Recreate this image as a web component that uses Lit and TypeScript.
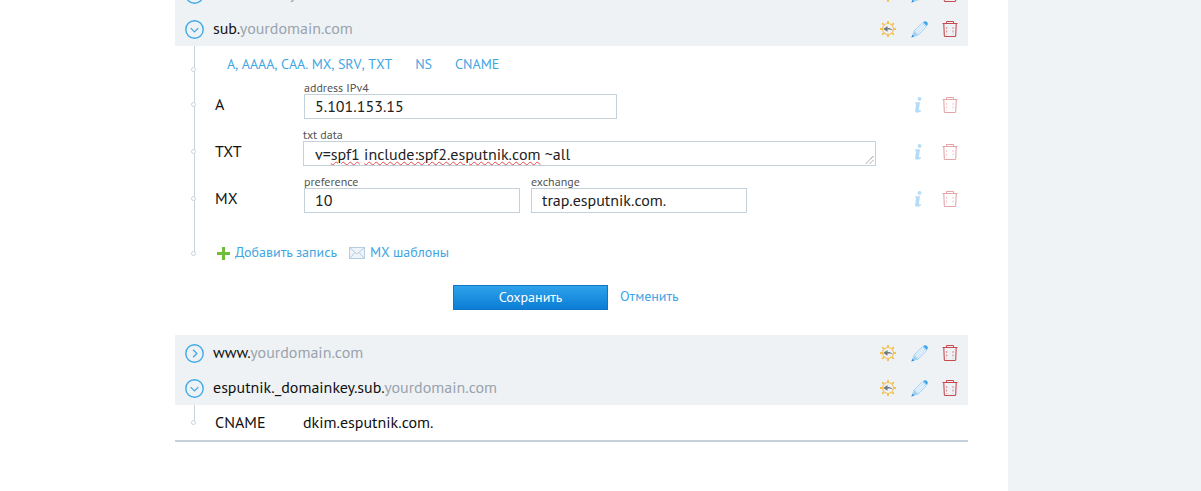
import { LitElement, html, css, svg } from "lit";
import { customElement } from "lit/decorators.js";

const chevron = (open: boolean) => html`<svg class="chev" width="20" height="20" viewBox="0 0 20 20" fill="none" stroke="#3fa9e8">
  <circle cx="9.500" cy="10.500" r="8.700" stroke-width="1.400"/>
  ${open ? svg`<path d="M5.700 9.100 9.500 12.900l3.800-3.800" stroke-width="1.300"/>` : svg`<path d="M8.100 6.700l3.800 3.800-3.800 3.800" stroke-width="1.300"/>`}
</svg>`;

const gear = html`<svg width="16" height="16" viewBox="0 0 16 16" fill="none">
  <circle cx="8" cy="8" r="5.500" stroke="#f3c04e" stroke-width="1.100"/>
  <path d="M8 0v2.500M8 13.500V16M0 8h2.500M13.500 8H16M2.200 2.200l1.600 1.600M12.200 12.200l1.600 1.600M2.200 13.800l1.600-1.600M12.200 3.800l1.600-1.600" stroke="#f3c04e" stroke-width="1.900"/>
  <path d="M3.300 8 7.500 4.900v2.100c2.200 0 4.100.5 5.300 2.500-1.500-.9-3.200-.9-5.300-.9v2.200z" fill="#6f7782"/>
</svg>`;

const pencil = html`<svg width="18" height="17" viewBox="0 0 18 17" fill="none">
  <path d="M2.800 10.200 11.300 1.900l4 4-8.500 8.500z" fill="#cfe6f8" stroke="#8cc6ef" stroke-width=".7"/>
  <path d="M4.400 9.800 12 2.500M5.800 11.200 13.400 3.900M7.200 12.600 14.800 5.300" stroke="#fff" stroke-width=".7"/>
  <path d="M12 1.300C13.100 0 14.800-.2 16 1c1.200 1.200 1.100 2.800-.2 4z" fill="#3fa6ea"/>
  <path d="M2.800 10.200 .4 16.600l6.400-2.200z" fill="#9fd0f2"/>
  <path d="M1.400 13.800.4 16.600l2.900-1z" fill="#2f8fdc"/>
</svg>`;

const trash = (cls: string) => html`<svg class=${cls} width="16" height="16" viewBox="0 0 16 16" fill="none" stroke="currentColor">
  <path d="M.5 2.500h15M4.500 2V.5h7V2" stroke-width="1"/>
  <path d="M1.800 3 2.300 14.400c0 .6.500 1.100 1.100 1.100h9.200c.6 0 1.100-.5 1.100-1.100L14.200 3" stroke-width="1.100"/>
  <path d="M4.700 6v7.500M11 6v7.500" stroke-width=".8" stroke-dasharray="2 1.500" opacity=".8"/>
</svg>`;

const info = html`<svg class="inf" width="8" height="16" viewBox="0 0 8 16" fill="#b5dcf6">
  <circle cx="5.500" cy="1.900" r="1.900"/>
  <path d="M1.200 5.200h4.800L4.900 12.600c-.1.700.4.900 2 .5v1.500c-1.700.8-2.900 1.200-4.100 1.200-1.300 0-1.800-.8-1.600-2.200l.8-6.200c0-.5-.2-.8-.8-.8z"/>
</svg>`;

const mail = html`<svg width="16" height="12" viewBox="0 0 16 12" fill="#eef4f9" stroke="#b5cddf">
  <rect x=".5" y=".5" width="15" height="11"/><path d="M.5 .5 8 7l7.500-6.500M.5 11.500 6 5.500M15.500 11.500 10 5.500" fill="none"/>
</svg>`;

const plus = html`<svg width="13" height="13" viewBox="0 0 13 13" fill="#6fbd3b"><path d="M5 0h3v5h5v3H8v5H5V8H0V5h5z"/></svg>`;

@customElement("app-root")
export class AppRoot extends LitElement {
  static styles = css`
    :host { display: block; height: 491px; overflow: hidden; background: #fff;
      font-family: "PT Sans", "Open Sans", "Noto Sans", sans-serif; font-size: 14px; color: #222; }
    .page { display: grid; grid-template-columns: 1008px 1fr; height: 491px; }
    .side { background: #f0f3f6; }
    .main { padding-left: 175px; padding-right: 40px; overflow: hidden; }
    .list { margin-top: -24px; }
    .head { height: 35px; background: #eef2f5; display: flex; align-items: center; padding: 0 10px; font-size: 16px; }
    .chev { display: block; margin-right: 8px; flex: none; margin-top: 1px; }
    .name { flex: 1; color: #111; padding-bottom: 2px; }
    .name span { color: #9aa3ad; }
    .acts { display: flex; align-items: center; gap: 15px; color: #c8494f; padding-top: 1px; }
    .acts svg { display: block; flex: none; }
    .acts svg:nth-child(2) { margin-right: -2px; }
    .body { position: relative; padding-left: 40px; }
    .rail { position: absolute; left: 19px; top: 0; width: 1px; background: #c8d2da; }
    .dot { position: absolute; left: -24px; width: 5px; height: 5px; box-sizing: border-box; border: 1px solid #c8d2da; border-radius: 50%; background: #fff; }
    .tabs { position: relative; display: flex; gap: 23px; height: 35px; align-items: center; padding-left: 12px; color: #3fa6e3; font-size: 14px; font-kerning: none; }
    .tabs .wide { letter-spacing: -.08px; }
    .tabs .dot { left: -24px; top: 21px; }
    .row { position: relative; height: 47px; display: grid; grid-template-columns: 89px 1fr auto; align-items: center; padding-right: 10px; }
    .row .dot { top: 21px; }
    .type { font-size: 16px; color: #111; padding-bottom: 2px; }
    .fields { display: flex; gap: 11px; align-self: start; }
    .field { display: flex; flex-direction: column; }
    .field label { font-size: 12px; line-height: 13px; color: #555; }
    input, .area { box-sizing: border-box; height: 25px; border: 1px solid #c5d1da; padding: 0 10px 2px; font: inherit; font-size: 16px; color: #222; outline: none; background: #fff; }
    .area { position: relative; display: flex; align-items: center; width: 573px; margin-left: -1px; white-space: pre; padding-left: 11px; padding-bottom: 0; }
    .area svg { position: absolute; right: 1px; bottom: 1px; }
    .sp { text-decoration: underline wavy #e8484c; text-decoration-thickness: 1px; }
    .pale { color: #e5a5a8; }
    .rowacts { display: flex; gap: 20px; align-items: center; justify-content: flex-end; padding-top: 1px; }
    .rowacts svg { display: block; flex: none; }
    .add { position: relative; height: 30px; display: flex; align-items: center; font-size: 14px; color: #3fa6e3; margin-top: 16px; }
    .add .dot { top: 13px; }
    .add a { display: flex; align-items: center; gap: 5px; }
    .add a span { padding-bottom: 2px; }
    .add a + a { margin-left: 12px; }
    .add .p { margin-left: 2px; }
    .foot { display: flex; justify-content: center; align-items: center; gap: 12px; padding: 17px 0 25px; margin-left: -40px; font-size: 14px; }
    .btn { width: 155px; height: 25px; box-sizing: border-box; color: #fff; border: 1px solid #0f75c4; background: linear-gradient(#2ea2ea, #0b7dd6); font: inherit; font-size: 14px; padding: 0 0 2px; }
    .cancel { color: #3fa6e3; width: 70px; padding-bottom: 3px; }
    .cname { position: relative; height: 35px; display: flex; align-items: center; font-size: 16px; color: #111; }
    .cname > div { padding-bottom: 2px; }
    .cname .dot { top: 15px; }
    .cname .t { width: 88px; }
    .end { border-bottom: 2px solid #c5d0da; }
  `;

  head(prefix: string, open: boolean) {
    return html`<div class="head">${chevron(open)}<div class="name">${prefix}<span>yourdomain.com</span></div>
      <div class="acts">${gear}${pencil}${trash("")}</div></div>`;
  }

  rowActs() {
    return html`<div class="rowacts">${info}${trash("pale")}</div>`;
  }

  render() {
    return html`<div class="page">
      <div class="main"><div class="list">
        ${this.head("tracker.sub.", false)}
        ${this.head("sub.", true)}
        <div class="body">
          <div class="rail" style="height:208px"></div>
          <div class="tabs"><i class="dot"></i><span class="wide">A, AAAA, CAA. MX, SRV, TXT</span><span>NS</span><span>CNAME</span></div>
          <div class="row"><i class="dot"></i><div class="type">A</div>
            <div class="fields"><div class="field"><label>address IPv4</label><input style="width:313px" value="5.101.153.15"></div></div>
            ${this.rowActs()}</div>
          <div class="row"><i class="dot"></i><div class="type">TXT</div>
            <div class="fields"><div class="field"><label style="margin-left:-1px">txt data</label>
              <div class="area"><span>v=<span class="sp">spf1</span> <span class="sp">include:spf2.esputnik.com</span> ~all</span>
                <svg width="9" height="9" viewBox="0 0 9 9" stroke="#666" fill="none"><path d="M1 8.500 8.500 1M5 8.500 8.500 5" stroke-dasharray="1 .6"/></svg></div></div></div>
            ${this.rowActs()}</div>
          <div class="row"><i class="dot"></i><div class="type">MX</div>
            <div class="fields">
              <div class="field"><label>preference</label><input style="width:216px" value="10"></div>
              <div class="field"><label>exchange</label><input style="width:216px" value="trap.esputnik.com."></div></div>
            ${this.rowActs()}</div>
          <div class="add"><i class="dot"></i><a class="p">${plus}<span>Добавить запись</span></a><a>${mail}<span>MX шаблоны</span></a></div>
          <div class="foot"><button class="btn">Сохранить</button><a class="cancel">Отменить</a></div>
        </div>
        ${this.head("www.", false)}
        ${this.head("esputnik._domainkey.sub.", true)}
        <div class="body end">
          <div class="rail" style="height:18px"></div>
          <div class="cname"><i class="dot"></i><div class="t">CNAME</div><div>dkim.esputnik.com.</div></div>
        </div>
      </div></div>
      <div class="side"></div>
    </div>`;
  }
}
